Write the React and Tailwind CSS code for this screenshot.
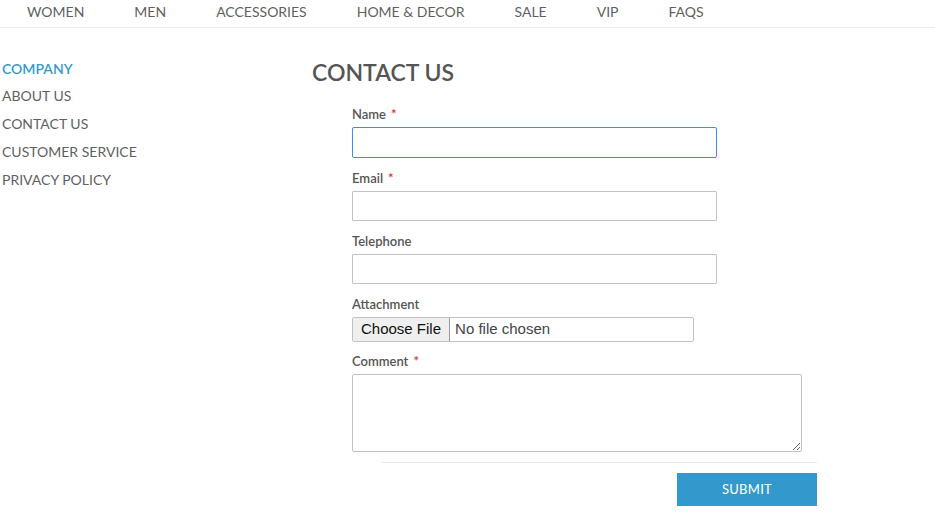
import React from "react";

const navItems = ["WOMEN", "MEN", "ACCESSORIES", "HOME & DECOR", "SALE", "VIP", "FAQS"];
const sideLinks = ["ABOUT US", "CONTACT US", "CUSTOMER SERVICE", "PRIVACY POLICY"];

function Label({ children, required }) {
  return (
    <label className="block text-[13px] font-semibold text-[#555] leading-[16px] mb-[5px]">
      {children}
      {required && <span className="text-[#e02b27] ml-[5px]">*</span>}
    </label>
  );
}

export default function App() {
  return (
    <div className="min-h-[532px] bg-white font-['Lato',sans-serif] text-[#555]">
      {/* Top nav */}
      <nav className="h-[28px] border-b border-[#ececec] flex items-start pl-[2px]">
        {navItems.map((item) => (
          <a key={item} className="px-[25px] text-[14px] leading-[24px] text-[#5f5f5f]">
            {item}
          </a>
        ))}
      </nav>

      <div className="flex pt-[32px]">
        {/* Sidebar */}
        <aside className="w-[312px] pl-[2px]">
          <div className="text-[14px] font-semibold text-[#3399cc] leading-[18px] mb-[10px]">COMPANY</div>
          <ul className="flex flex-col gap-[10px] -mt-[1px]">
            {sideLinks.map((l) => (
              <li key={l} className="text-[14px] leading-[18px] text-[#5f5f5f]">
                {l}
              </li>
            ))}
          </ul>
        </aside>

        {/* Main */}
        <main className="flex-1">
          <h1 className="text-[23px] font-semibold leading-[30px] text-[#555] -mt-[3px]">CONTACT US</h1>

          <form className="pl-[40px] pt-[19px] w-[505px]">
            <div className="mb-[12px]">
              <Label required>Name</Label>
              <input className="block w-[365px] h-[31px] border border-[#3f8de8] rounded-[2px] outline-none" />
            </div>
            <div className="mb-[12px]">
              <Label required>Email</Label>
              <input className="block w-[365px] h-[30px] border border-[#c2c2c2] rounded-[1px] outline-none" />
            </div>
            <div className="mb-[12px]">
              <Label>Telephone</Label>
              <input className="block w-[365px] h-[30px] border border-[#c2c2c2] rounded-[1px] outline-none" />
            </div>
            <div className="mb-[11px]">
              <Label>Attachment</Label>
              <div className="flex items-center w-[342px] h-[25px] border border-[#c2c2c2] rounded-[2px] font-['Liberation_Sans',Arial,sans-serif]">
                <span className="h-[23px] px-[8px] flex items-center bg-[#efefef] border-r border-[#999] rounded-l-[2px] text-[15px] text-[#111]">
                  Choose File
                </span>
                <span className="ml-[5px] text-[15px] text-[#444]">No file chosen</span>
              </div>
            </div>
            <div>
              <Label required>Comment</Label>
              <textarea className="block w-[450px] h-[78px] border border-[#c2c2c2] rounded-[2px] resize-y outline-none" />
            </div>

            <div className="ml-[30px] mt-[10px] border-t border-[#e8e8e8] pt-[10px] flex justify-end w-[435px]">
              <button
                type="button"
                className="w-[140px] h-[33px] bg-[#3399cc] text-white text-[13px] tracking-[0.3px]"
              >
                SUBMIT
              </button>
            </div>
          </form>
        </main>
      </div>
    </div>
  );
}
